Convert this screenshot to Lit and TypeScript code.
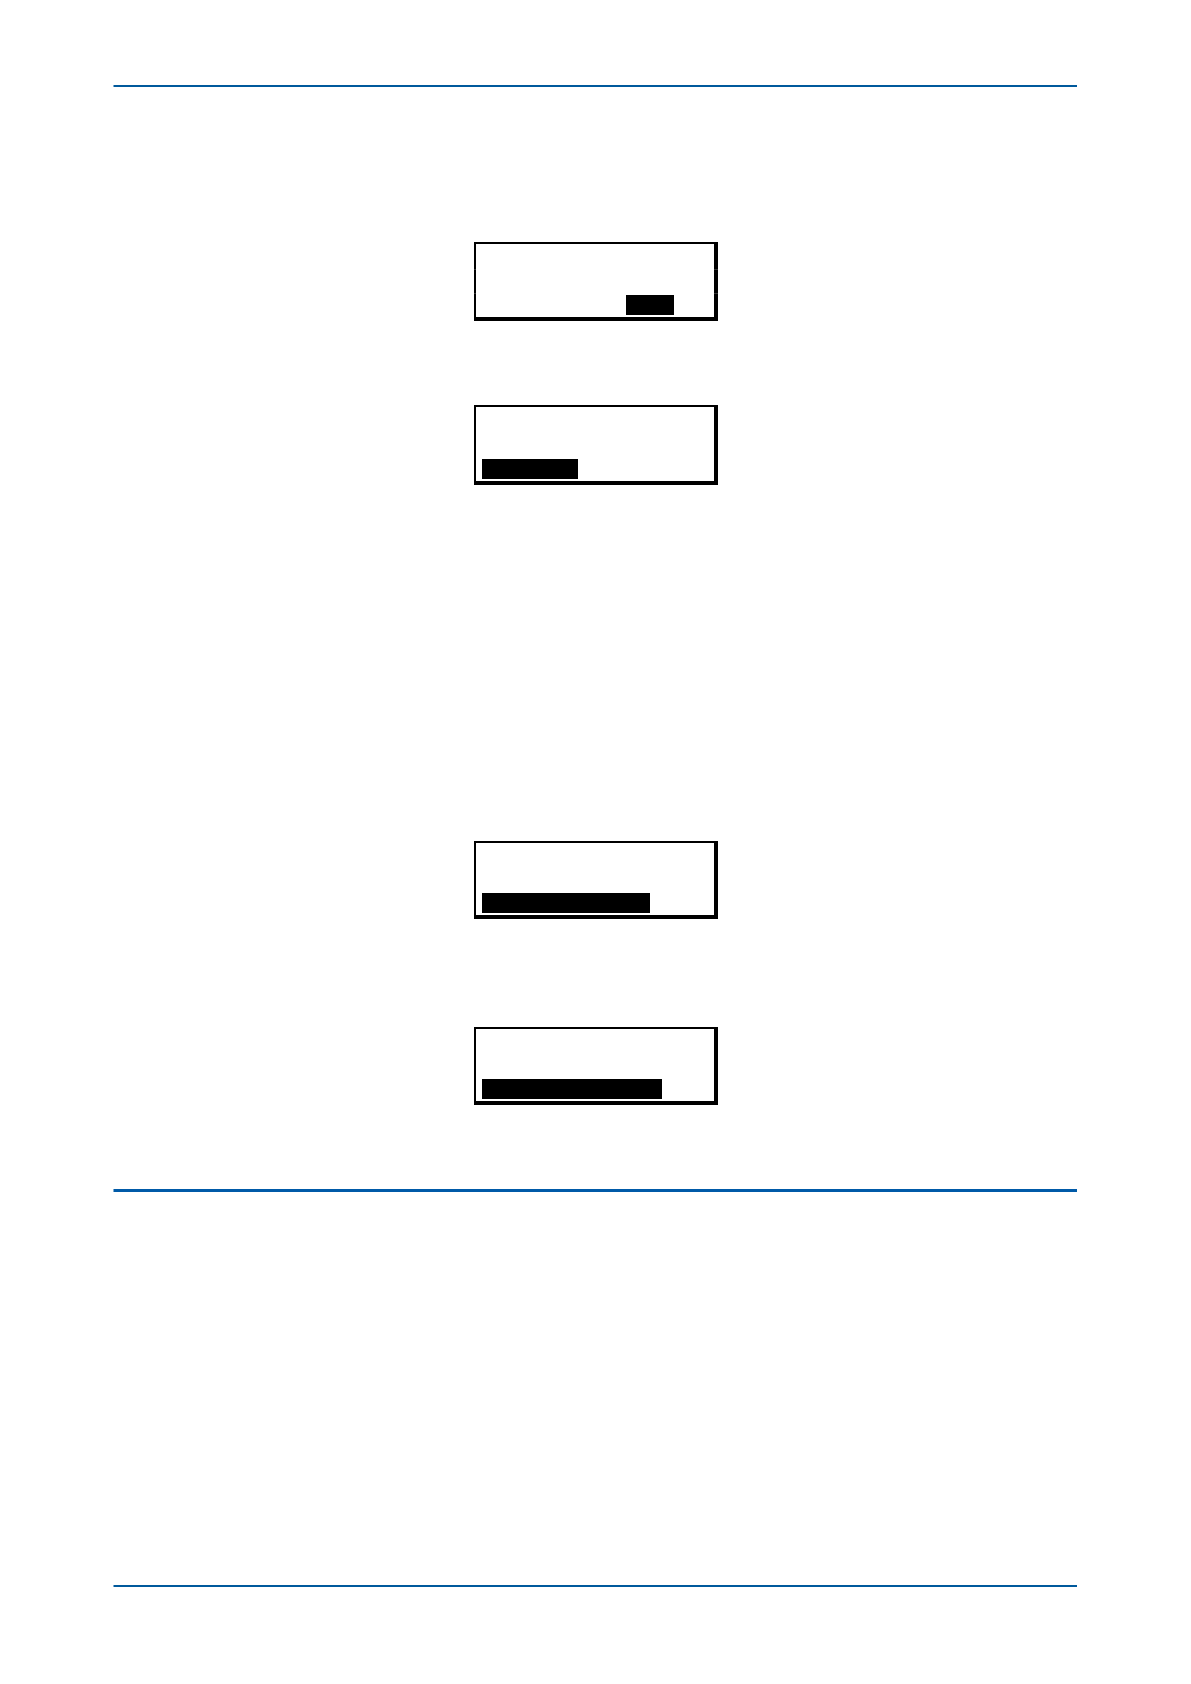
import { LitElement, html, css } from "lit";
import { customElement, property } from "lit/decorators.js";

/** Width of one character cell on the display, in pixels. */
const CELL = 12;

/** A three-line display panel with a highlighted run of cells on its last line. */
@customElement("display-panel")
class DisplayPanel extends LitElement {
  @property({ type: Number }) start = 0;
  @property({ type: Number }) cells = 0;
  @property({ type: Boolean }) seams = false;

  static styles = css`
    :host {
      display: flex;
      align-items: flex-end;
      box-sizing: border-box;
      width: 244px;
      position: relative;
      padding: 50px 6px 2px;
      border: solid #000;
      border-width: 2px 4px 4px 2px;
    }
    .highlight {
      height: 20px;
      background: #000;
    }
    .seam {
      position: absolute;
      left: -2px;
      right: -4px;
      top: 25px;
      height: 1px;
      box-sizing: border-box;
      border: solid #333;
      border-width: 0 4px 0 2px;
    }
    .seam.lower {
      top: 49px;
    }
  `;

  render() {
    return html`
      <div
        class="highlight"
        style="margin-left:${this.start * CELL}px;width:${this.cells * CELL}px"
      ></div>
      ${this.seams
        ? html`<div class="seam"></div><div class="seam lower"></div>`
        : null}
    `;
  }
}

@customElement("app-root")
class AppRoot extends LitElement {
  static styles = css`
    :host {
      display: block;
      background: #fff;
    }
    .page {
      box-sizing: border-box;
      min-height: 100vh;
      padding: 85px 114px 97px 113px;
      display: flex;
      flex-direction: column;
    }
    .rule {
      box-sizing: border-box;
      width: 100%;
      height: 2px;
      margin: 0;
      border: 0;
      border-left: 1px solid #7fabce;
      background: #00599c;
    }
    .rule.section {
      height: 3px;
      background: #005aa8;
    }
    .rule.footer {
      margin-top: auto;
    }
    .panels {
      display: flex;
      flex-direction: column;
      align-items: center;
      padding: 155px 0 84px 2px;
    }
    .group {
      display: flex;
      flex-direction: column;
      gap: 84px;
    }
    .group + .group {
      margin-top: 356px;
      gap: 108px;
    }
    .tall {
      padding-top: 51px;
    }
    .taller {
      padding-top: 52px;
    }
  `;

  render() {
    return html`
      <main class="page">
        <hr class="rule" />
        <section class="panels">
          <div class="group">
            <display-panel class="tall" start="12" cells="4" seams></display-panel>
            <display-panel class="taller" cells="8"></display-panel>
          </div>
          <div class="group">
            <display-panel cells="14"></display-panel>
            <display-panel cells="15"></display-panel>
          </div>
        </section>
        <hr class="rule section" />
        <hr class="rule footer" />
      </main>
    `;
  }
}
